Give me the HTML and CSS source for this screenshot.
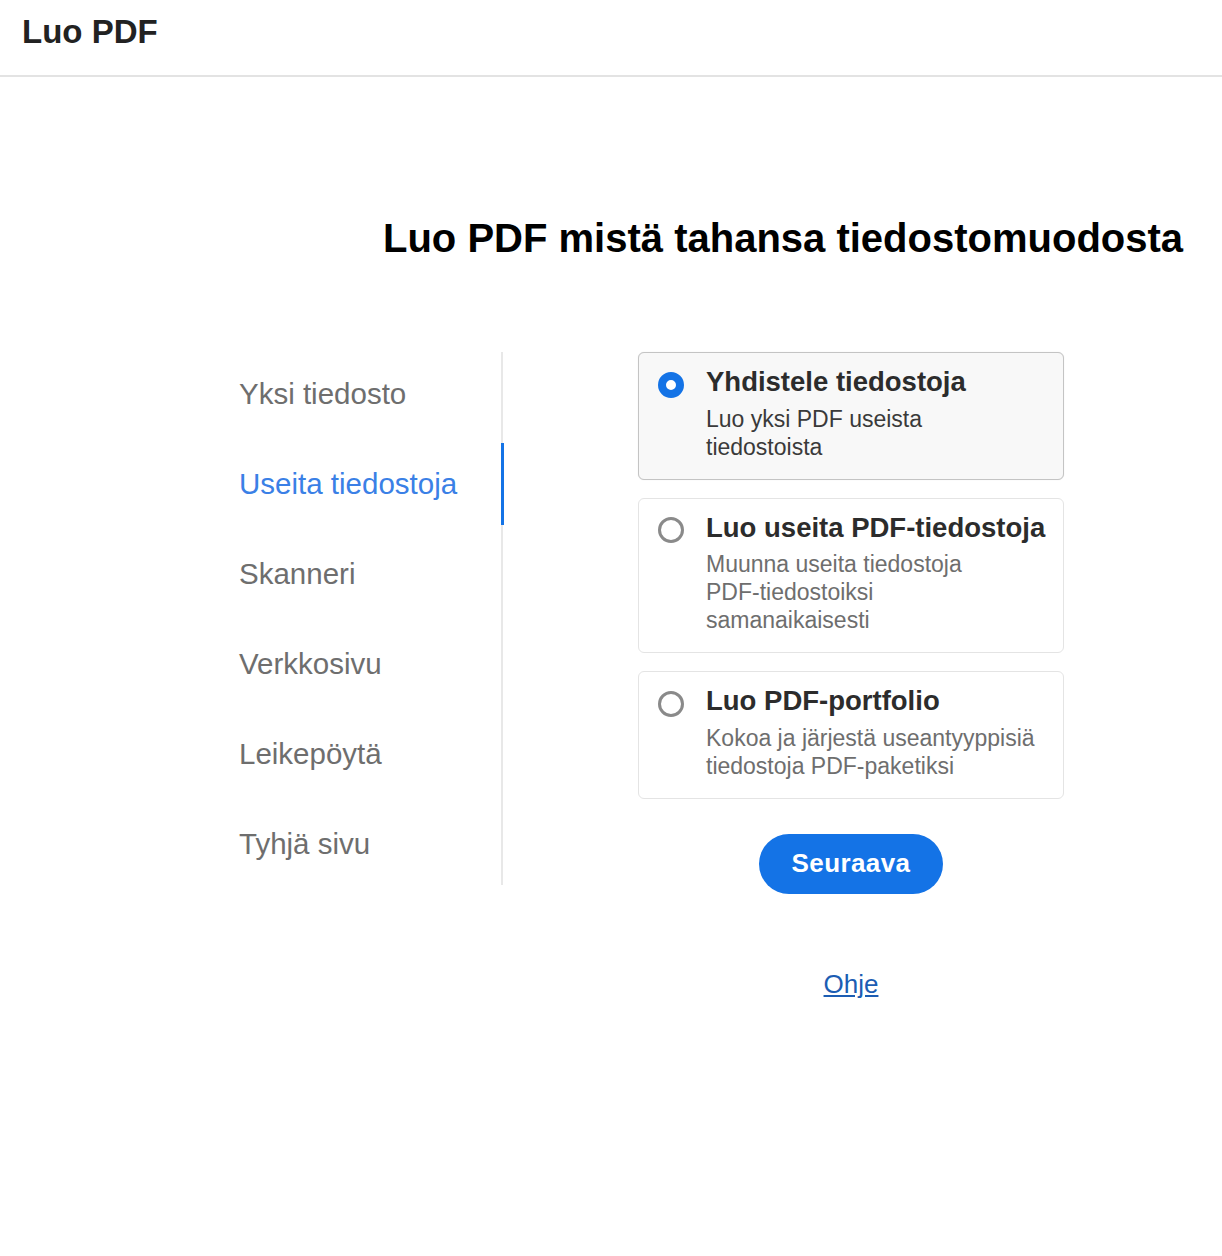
FILE: index.html
```html
<!DOCTYPE html>
<html lang="fi">
<head>
<meta charset="utf-8">
<title>Luo PDF</title>
<link rel="stylesheet" href="styles.css">
</head>
<body>
<header class="topbar">
  <div class="app-title">Luo PDF</div>
</header>
<main class="main">
  <h1 class="heading">Luo PDF mistä tahansa tiedostomuodosta</h1>
  <div class="columns">
    <nav class="nav">
      <div class="nav-item">Yksi tiedosto</div>
      <div class="nav-item active">Useita tiedostoja</div>
      <div class="nav-item">Skanneri</div>
      <div class="nav-item">Verkkosivu</div>
      <div class="nav-item">Leikepöytä</div>
      <div class="nav-item">Tyhjä sivu</div>
    </nav>
    <section class="options">
      <div class="card selected">
        <span class="radio checked"></span>
        <div class="card-body">
          <div class="card-title">Yhdistele tiedostoja</div>
          <div class="card-desc">Luo yksi PDF useista<br>tiedostoista</div>
        </div>
      </div>
      <div class="card">
        <span class="radio"></span>
        <div class="card-body">
          <div class="card-title">Luo useita PDF-tiedostoja</div>
          <div class="card-desc">Muunna useita tiedostoja<br>PDF-tiedostoiksi<br>samanaikaisesti</div>
        </div>
      </div>
      <div class="card">
        <span class="radio"></span>
        <div class="card-body">
          <div class="card-title">Luo PDF-portfolio</div>
          <div class="card-desc">Kokoa ja järjestä useantyyppisiä<br>tiedostoja PDF-paketiksi</div>
        </div>
      </div>
      <button class="next-btn" type="button">Seuraava</button>
      <a class="help-link" href="#">Ohje</a>
    </section>
  </div>
</main>
</body>
</html>
```
FILE: styles.css
```css
* { box-sizing: border-box; }
html, body {
  margin: 0;
  padding: 0;
  background: #ffffff;
  font-family: "Liberation Sans", Arial, sans-serif;
}
.topbar {
  height: 77px;
  border-bottom: 2px solid #e3e3e3;
  padding: 12px 0 0 22px;
}
.app-title {
  font-size: 33px;
  line-height: 40px;
  font-weight: 700;
  color: #222222;
}
.main {
  padding-top: 137px;
}
.heading {
  margin: 0 0 0 383px;
  font-size: 40px;
  line-height: 48px;
  font-weight: 700;
  color: #000000;
  white-space: nowrap;
}
.columns {
  display: flex;
  align-items: flex-start;
  margin: 87px 0 0 239px;
}
.nav {
  position: relative;
  width: 264px;
  display: flex;
  flex-direction: column;
}
.nav::before {
  content: "";
  position: absolute;
  right: 0;
  top: 3px;
  bottom: 4px;
  width: 2px;
  background: #e8e8e8;
}
.nav-item {
  position: relative;
  height: 90px;
  line-height: 90px;
  font-size: 29.5px;
  color: #6e6e6e;
  white-space: nowrap;
}
.nav-item.active {
  color: #3a80e6;
}
.nav-item.active::after {
  content: "";
  position: absolute;
  right: -1px;
  top: 4px;
  bottom: 4px;
  width: 3px;
  background: #1473e6;
}
.options {
  width: 426px;
  margin-left: 135px;
  padding-top: 3px;
  display: flex;
  flex-direction: column;
  align-items: stretch;
}
.card {
  display: flex;
  align-items: flex-start;
  gap: 22px;
  border: 1px solid #e4e4e4;
  border-radius: 6px;
  padding: 12px 16px 18px 19px;
  margin-bottom: 18px;
  background: #ffffff;
}
.card.selected {
  background: #f8f8f8;
  border-color: #c4c4c4;
  box-shadow: 0 0 1px rgba(0,0,0,0.15);
}
.radio {
  flex: none;
  width: 26px;
  height: 26px;
  margin-top: 6.5px;
  border-radius: 50%;
  border: 3px solid #8a8a8a;
  background: #ffffff;
}
.radio.checked {
  border: 8.5px solid #1473e6;
  background: #ffffff;
}
.card-title {
  font-size: 27.5px;
  line-height: 34px;
  font-weight: 700;
  color: #2c2c2c;
  white-space: nowrap;
}
.card-desc {
  margin-top: 5.5px;
  font-size: 23px;
  line-height: 28px;
  color: #6e6e6e;
  white-space: nowrap;
}
.card.selected .card-desc {
  color: #3a3a3a;
}
.next-btn {
  align-self: center;
  margin-top: 17px;
  width: 184px;
  height: 60px;
  border: none;
  border-radius: 30px;
  background: #1473e6;
  color: #ffffff;
  font-family: "Liberation Sans", Arial, sans-serif;
  font-size: 26px;
  font-weight: 700;
  letter-spacing: 0.4px;
  cursor: pointer;
}
.help-link {
  align-self: center;
  margin-top: 75px;
  font-size: 26px;
  line-height: 30px;
  color: #1c5db3;
  text-decoration: underline;
}
```
